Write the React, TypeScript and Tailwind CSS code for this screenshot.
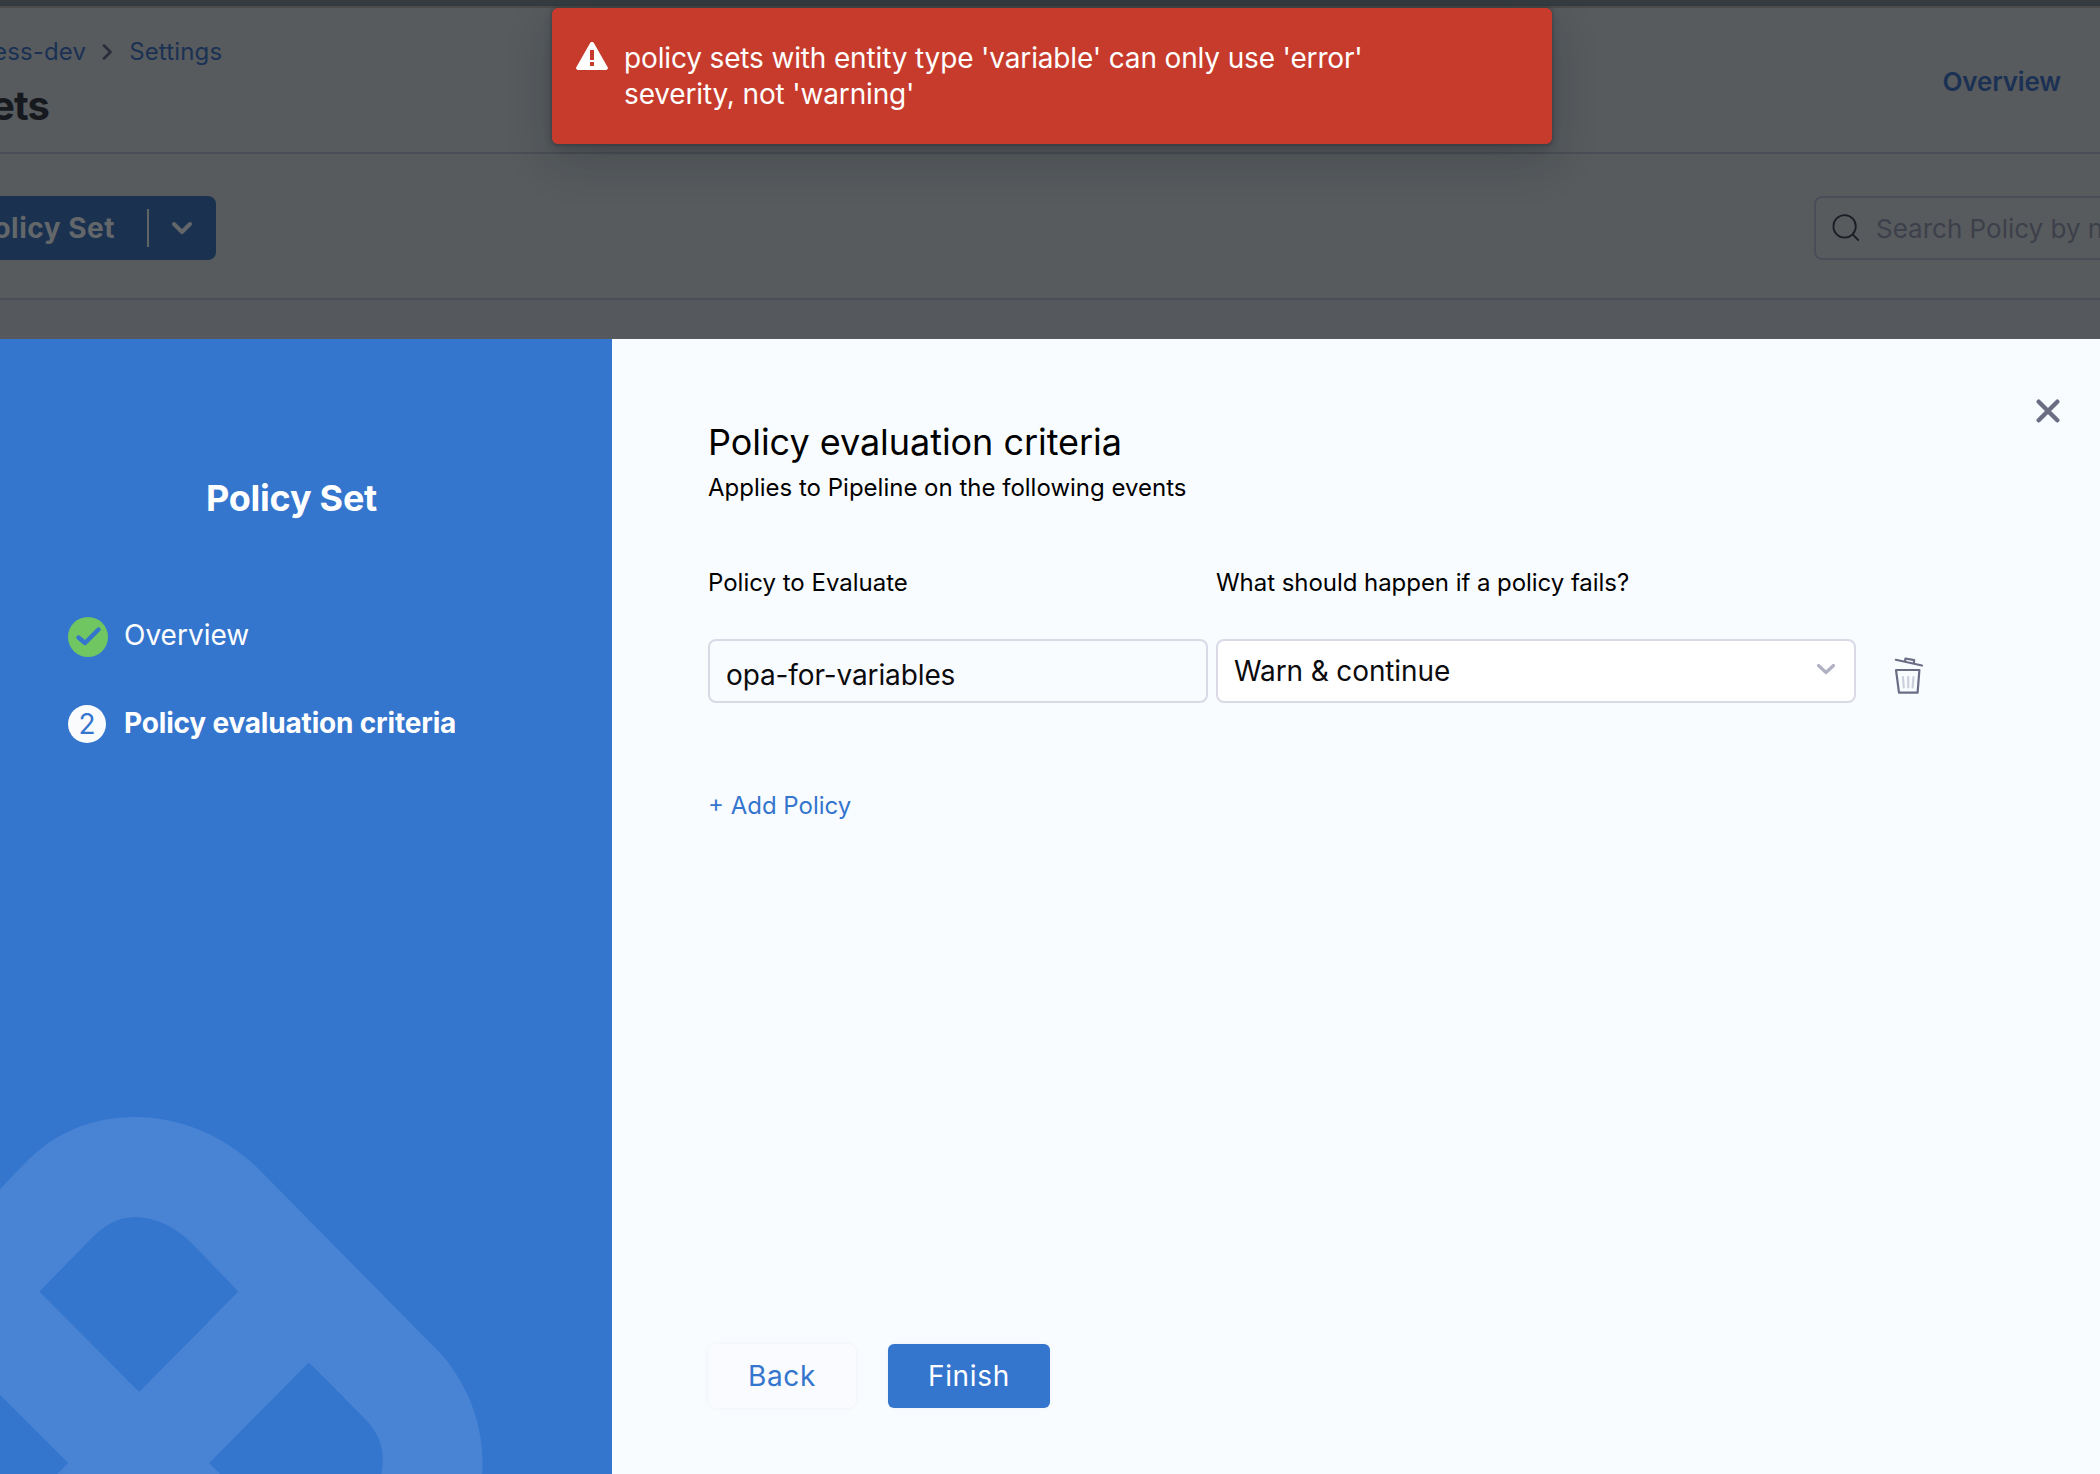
import React from "react";

function PageHeader() {
  return (
    <header className="flex h-[146px] items-start justify-between border-b-2 border-[#4b4e56] bg-[#575b5e]">
      <div className="flex flex-col pt-[26px]">
        <nav className="-ml-[7px] flex h-9 items-center text-[24px] leading-9 tracking-[0.15px] text-[#1b3154]">
          <span>ess-dev</span>
          <svg className="ml-[13px] mr-[12px]" width="18" height="20" viewBox="0 0 18 20" fill="none" stroke="#2b2d38" strokeWidth="2.6" strokeLinecap="round" strokeLinejoin="round">
            <path d="M5 3.5 11.5 10 5 16.5" />
          </svg>
          <span>Settings</span>
        </nav>
        <h1 className="-ml-[9px] mt-[12px] text-[40px] font-bold leading-[48px] tracking-[-0.8px] text-[#16191d]">ets</h1>
      </div>
      <a className="mr-[39px] mt-[56px] text-[26px] font-semibold leading-9 tracking-[-0.15px] text-[#1b3154]">Overview</a>
    </header>
  );
}

function Toolbar() {
  return (
    <div className="flex h-[146px] items-start justify-between border-b-2 border-[#4b4e56] bg-[#575b5e] pt-[42px]">
      <button className="flex h-16 w-[216px] items-center overflow-hidden rounded-r-lg bg-[#1b3150] text-[28px] font-bold tracking-[0.5px] text-[#63676a]">
        <span className="flex w-[147px] shrink-0 justify-end whitespace-nowrap pr-[32px]">olicy Set</span>
        <span className="h-[38px] w-[2px] shrink-0 bg-[#606467]" />
        <svg className="ml-[21px] shrink-0" width="24" height="20" viewBox="0 0 24 20" fill="none" stroke="#63676a" strokeWidth="4" strokeLinecap="round" strokeLinejoin="round">
          <path d="M4 6l8 8 8-8" />
        </svg>
      </button>
      <div className="flex h-16 w-[286px] items-center overflow-hidden rounded-l-lg border-2 border-r-0 border-[#4b4e59] pl-[16px]">
        <svg className="shrink-0" width="28" height="28" viewBox="0 0 28 28" fill="none" stroke="#1b1e25" strokeWidth="1.8" strokeLinecap="round">
          <circle cx="12.6" cy="12.4" r="11.2" />
          <path d="M20.6 20.4 26.2 26" />
        </svg>
        <span className="ml-[16px] whitespace-nowrap text-[26px] text-[#3d404a]">Search Policy by n</span>
      </div>
    </div>
  );
}

function Toast() {
  return (
    <div className="absolute left-[552px] top-2 flex h-[136px] w-[1000px] items-start rounded-md bg-[#c73b2c] pt-[32px] text-white shadow-[0_0_0_2px_rgba(16,22,26,0.1),0_4px_8px_rgba(16,22,26,0.2),0_16px_48px_rgba(16,22,26,0.2)]">
      <svg className="ml-[24px] mt-[2px] shrink-0" width="32" height="28" viewBox="0 0 32 28">
        <path fillRule="evenodd" fill="#fff" d="M31.7 25.2 18 1.2C17.6.5 16.9 0 16 0s-1.600.500-2 1.200l-13.700 24c-.2.300-.3.600-.3.900C0 27.200.900 28 2 28h28c1.100 0 2-.800 2-1.900 0-.3-.1-.6-.3-.9ZM18 24h-4v-4h4v4Zm0-6h-4V8h4v10Z" />
      </svg>
      <p className="ml-[16px] w-[780px] text-[28px] leading-9 tracking-[-0.15px]">
        policy sets with entity type 'variable' can only use 'error'
        <br />
        severity, not 'warning'
      </p>
    </div>
  );
}

function Sidebar() {
  return (
    <aside className="relative flex w-[612px] shrink-0 flex-col overflow-hidden bg-[#3475ce] text-white">
      <svg className="absolute bottom-0 left-0" width="604" height="394" viewBox="0 1080 612 394" preserveAspectRatio="none">
        <path
          fill="#4983d4"
          fillRule="evenodd"
          d="M0 1189 22 1166.500C56 1130 97 1117 137 1117C180 1117 225 1134 260 1167L436 1343C470 1374 489 1419 489 1462Q489 1468 488.500 1474H0ZM40 1291.500 141 1392 241.500 1291.500 193 1242C176 1226 156 1217 137 1217C120 1217 105 1225 90 1241ZM313 1362.500 212 1463 223 1474H386.500Q388 1466 388 1459C388 1444 381 1430 369 1418ZM0 1395V1474H58L69 1463Z"
        />
      </svg>
      <h2 className="ml-[206px] mt-[135px] text-[36px] font-bold leading-[48px] tracking-[-0.25px]">Policy Set</h2>
      <div className="ml-[68px] mt-[95px] flex h-10 items-center">
        <svg width="40" height="40" viewBox="0 0 40 40">
          <circle cx="20" cy="20" r="20" fill="#70c661" />
          <path d="M10.500 20.500 17 26 30.500 12.500" fill="none" stroke="#3475ce" strokeWidth="4.400" strokeLinecap="round" strokeLinejoin="round" />
        </svg>
        <span className="-mt-1 ml-[16px] text-[28px] leading-9">Overview</span>
      </div>
      <div className="ml-[68px] mt-[48px] flex h-[38px] items-center">
        <span className="flex h-[38px] w-[38px] items-center justify-center rounded-full bg-[#fafbfc] text-[28px] text-[#3475ce]">2</span>
        <span className="-mt-[2px] ml-[18px] text-[28px] font-bold leading-9 tracking-[-0.18px]">Policy evaluation criteria</span>
      </div>
    </aside>
  );
}

function TrashIcon() {
  return (
    <svg className="ml-[38px] mt-[17px]" width="30" height="40" viewBox="0 0 30 40" fill="none" stroke="#6b6d85" strokeWidth="2.200" strokeLinecap="round" strokeLinejoin="round">
      <path d="M1.800 3.800 28 9.500M11 5.500 11.500 2.500 20.200 4.200 19.800 7.500" />
      <path d="M2 14H25.400L23.600 36.600H5Z" />
      <path stroke="#cdd0dc" d="M8.900 21 9.800 31.500M14.200 21V31.500M19.500 21 18.600 31.500" />
    </svg>
  );
}

function CriteriaForm() {
  return (
    <main className="flex flex-1 flex-col bg-[#f9fcff] text-black">
      <div className="flex h-[238px] justify-between pl-[96px] pr-[40px]">
        <div className="flex flex-col">
          <h2 className="mt-[79px] text-[36px] leading-[48px] tracking-[-0.05px]">Policy evaluation criteria</h2>
          <p className="mt-[6px] text-[24px] leading-8">Applies to Pipeline on the following events</p>
        </div>
        <svg className="mt-[60px]" width="24" height="24" viewBox="0 0 24 24" fill="none" stroke="#6b6d85" strokeWidth="4.400" strokeLinecap="round">
          <path d="M2.700 2.700 21.300 21.300M21.300 2.700 2.700 21.300" />
        </svg>
      </div>
      <div className="-mt-[10px] flex gap-2 pl-[96px] text-[24px] leading-8">
        <span className="w-[500px]">Policy to Evaluate</span>
        <span className="tracking-[-0.05px]">What should happen if a policy fails?</span>
      </div>
      <div className="mt-[40px] flex items-start gap-2 pl-[96px] text-[28px] tracking-[-0.12px] text-[#0b0b0d]">
        <div className="flex h-16 w-[500px] items-center rounded-lg border-2 border-[#d9dae6] pl-[16px] pt-[7px]">opa-for-variables</div>
        <div className="flex h-16 w-[640px] items-center justify-between rounded-lg border-2 border-[#d9dae6] bg-white pl-[16px] pr-[18px]">
          <span>Warn &amp; continue</span>
          <svg className="-mt-[4px]" width="20" height="12" viewBox="0 0 20 12" fill="none" stroke="#b0b1c3" strokeWidth="3.200" strokeLinecap="round" strokeLinejoin="round">
            <path d="M2.500 2.500 10 9.500 17.500 2.500" />
          </svg>
        </div>
        <div className="-ml-2">
          <TrashIcon />
        </div>
      </div>
      <a className="ml-[96px] mt-[87px] text-[24px] leading-8 text-[#3475ce]">+ Add Policy</a>
      <div className="mt-auto flex gap-8 pb-[66px] pl-[96px] text-[28px] tracking-[0.7px]">
        <button className="h-16 w-[148px] rounded-lg bg-[#fafbfe] text-[#3475ce] shadow-[0_0_4px_rgba(40,41,61,0.06)]">Back</button>
        <button className="h-16 w-[162px] rounded-md bg-[#3475ce] text-white shadow-[0_0_4px_rgba(40,41,61,0.06)]">Finish</button>
      </div>
    </main>
  );
}

export default function App() {
  return (
    <div className="relative flex h-[1474px] w-[2100px] flex-col overflow-hidden bg-[#55585c] font-['Inter',sans-serif]">
      <div className="h-2 shrink-0 border-b-2 border-[#4b4c4b] bg-[#353c3f]" />
      <PageHeader />
      <Toolbar />
      <div className="mt-[39px] flex flex-1">
        <Sidebar />
        <CriteriaForm />
      </div>
      <Toast />
    </div>
  );
}
